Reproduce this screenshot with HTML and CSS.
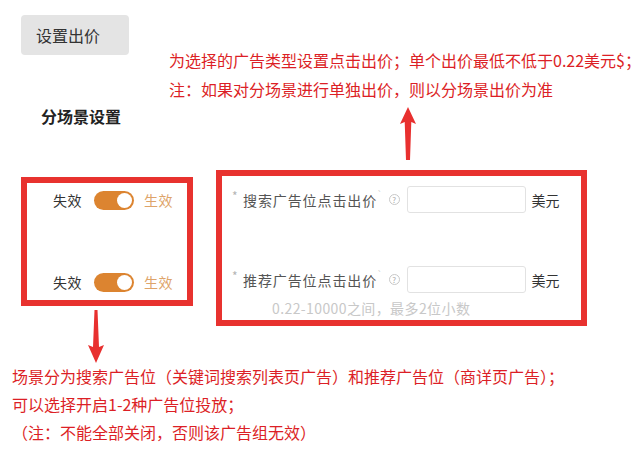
FILE: index.html
```html
<!DOCTYPE html>
<html lang="zh-CN">
<head>
<meta charset="utf-8">
<link rel="stylesheet" href="styles.css">
</head>
<body>
<div class="page">
  <div class="top">
    <div class="top-left">
      <div class="btn">设置出价</div>
      <div class="title">分场景设置</div>
    </div>
    <div class="top-right">
      <p class="note">为选择的广告类型设置点击出价；单个出价最低不低于0.22美元$；</p>
      <p class="note">注：如果对分场景进行单独出价，则以分场景出价为准</p>
      <svg class="arrow-up" width="16" height="53" viewBox="0 0 16 53"><polygon points="8,0 16,17 11.3,15 10,53 6,53 4.7,15 0,17" fill="#e8302f"/></svg>
    </div>
  </div>
  <div class="boxes">
    <div class="left-col">
      <div class="redbox switches">
        <div class="sw-row">
          <span class="off">失效</span>
          <span class="toggle"><span class="knob"></span></span>
          <span class="on">生效</span>
        </div>
        <div class="sw-row">
          <span class="off">失效</span>
          <span class="toggle"><span class="knob"></span></span>
          <span class="on">生效</span>
        </div>
      </div>
      <svg class="arrow-down" width="16" height="53" viewBox="0 0 16 53"><polygon points="6.5,0 9.5,0 11,37 16,35 8,53 0,35 5,37" fill="#e8302f"/></svg>
    </div>
    <div class="redbox bids">
      <div class="bid-row">
        <span class="req">*</span>
        <span class="label">搜索广告位点击出价</span><span class="tick">`</span>
        <span class="help">?</span>
        <span class="input"></span>
        <span class="unit">美元</span>
      </div>
      <div class="bid-row second">
        <span class="req">*</span>
        <span class="label">推荐广告位点击出价</span><span class="tick">`</span>
        <span class="help">?</span>
        <span class="input"></span>
        <span class="unit">美元</span>
      </div>
      <div class="hint">0.22-10000之间，最多2位小数</div>
    </div>
  </div>
  <div class="bottom-notes">
    <p class="note">场景分为搜索广告位（关键词搜索列表页广告）和推荐广告位（商详页广告）；</p>
    <p class="note">可以选择开启1-2种广告位投放；</p>
    <p class="note">（注：不能全部关闭，否则该广告组无效）</p>
  </div>
</div>
</body>
</html>
```
FILE: styles.css
```css
* { box-sizing: border-box; }
html, body { margin: 0; padding: 0; background: #fff; }
body {
  font-family: "Noto Sans CJK SC", "Noto Sans", sans-serif;
  color: #333;
  width: 641px;
  height: 459px;
  overflow: hidden;
}
p { margin: 0; }

.top { display: flex; height: 170px; }
.top-left { width: 170px; padding-left: 21px; padding-top: 15px; }
.btn {
  width: 108px; height: 40px;
  background: #e4e4e4;
  border-radius: 4px;
  font-size: 16px;
  line-height: 40px;
  padding-left: 15px;
  color: #333;
}
.title {
  margin-top: 51px;
  margin-left: 20px;
  font-size: 16px;
  font-weight: bold;
  line-height: 20px;
  color: #222;
}
.top-right { padding-top: 46px; }
.note {
  color: #dc1f26;
  font-size: 16px;
  line-height: 29px;
  white-space: nowrap;
}
.arrow-up { display: block; margin-top: 3px; margin-left: 231px; }

.boxes { display: flex; align-items: flex-start; }
.left-col { margin-left: 21px; padding-top: 7px; width: 172px; }
.redbox { border: 6px solid #e8322f; background: #fff; }
.switches { height: 129px; padding: 7px 0 0 26px; }
.sw-row { display: flex; align-items: center; height: 20px; font-size: 14px; }
.sw-row + .sw-row { margin-top: 62px; }
.off { color: #333; letter-spacing: 0.5px; }
.on { color: #dea46a; margin-left: 10px; letter-spacing: 0.5px; }
.toggle {
  position: relative;
  margin-left: 12px;
  width: 40px; height: 19px;
  background: #dc8430;
  border-radius: 10px;
}
.knob {
  position: absolute;
  right: 2px; top: 2px;
  width: 15px; height: 15px;
  border-radius: 50%;
  background: #fff;
}
.arrow-down { display: block; margin-top: 4px; margin-left: 67px; }

.bids {
  margin-left: 23px;
  width: 371px;
  height: 156px;
  padding: 10px 0 0 10px;
}
.bid-row { display: flex; align-items: center; height: 27px; font-size: 14px; }
.bid-row.second { margin-top: 53px; }
.req { color: #b5b5b5; font-size: 12px; width: 11px; position: relative; top: -4px; }
.label { color: #555; letter-spacing: 0.9px; }
.tick { color: #ccc; font-size: 9px; position: relative; top: -5px; }
.help {
  margin-left: 6px;
  width: 11px; height: 11px;
  border: 1px solid #c8c8c8;
  border-radius: 50%;
  font-size: 8px;
  line-height: 9px;
  text-align: center;
  color: #aaa;
}
.input {
  margin-left: 7px;
  width: 119px; height: 27px;
  border: 1px solid #e2e2e2;
  border-radius: 3px;
  background: #fff;
}
.unit { margin-left: 6px; color: #333; }
.hint {
  margin-top: 5px;
  margin-left: 40px;
  font-size: 14px;
  line-height: 20px;
  color: #c8c8c8;
  letter-spacing: 0.4px;
}

.bottom-notes { padding-left: 12px; margin-top: -1px; }
.bottom-notes .note { line-height: 28px; }
```
